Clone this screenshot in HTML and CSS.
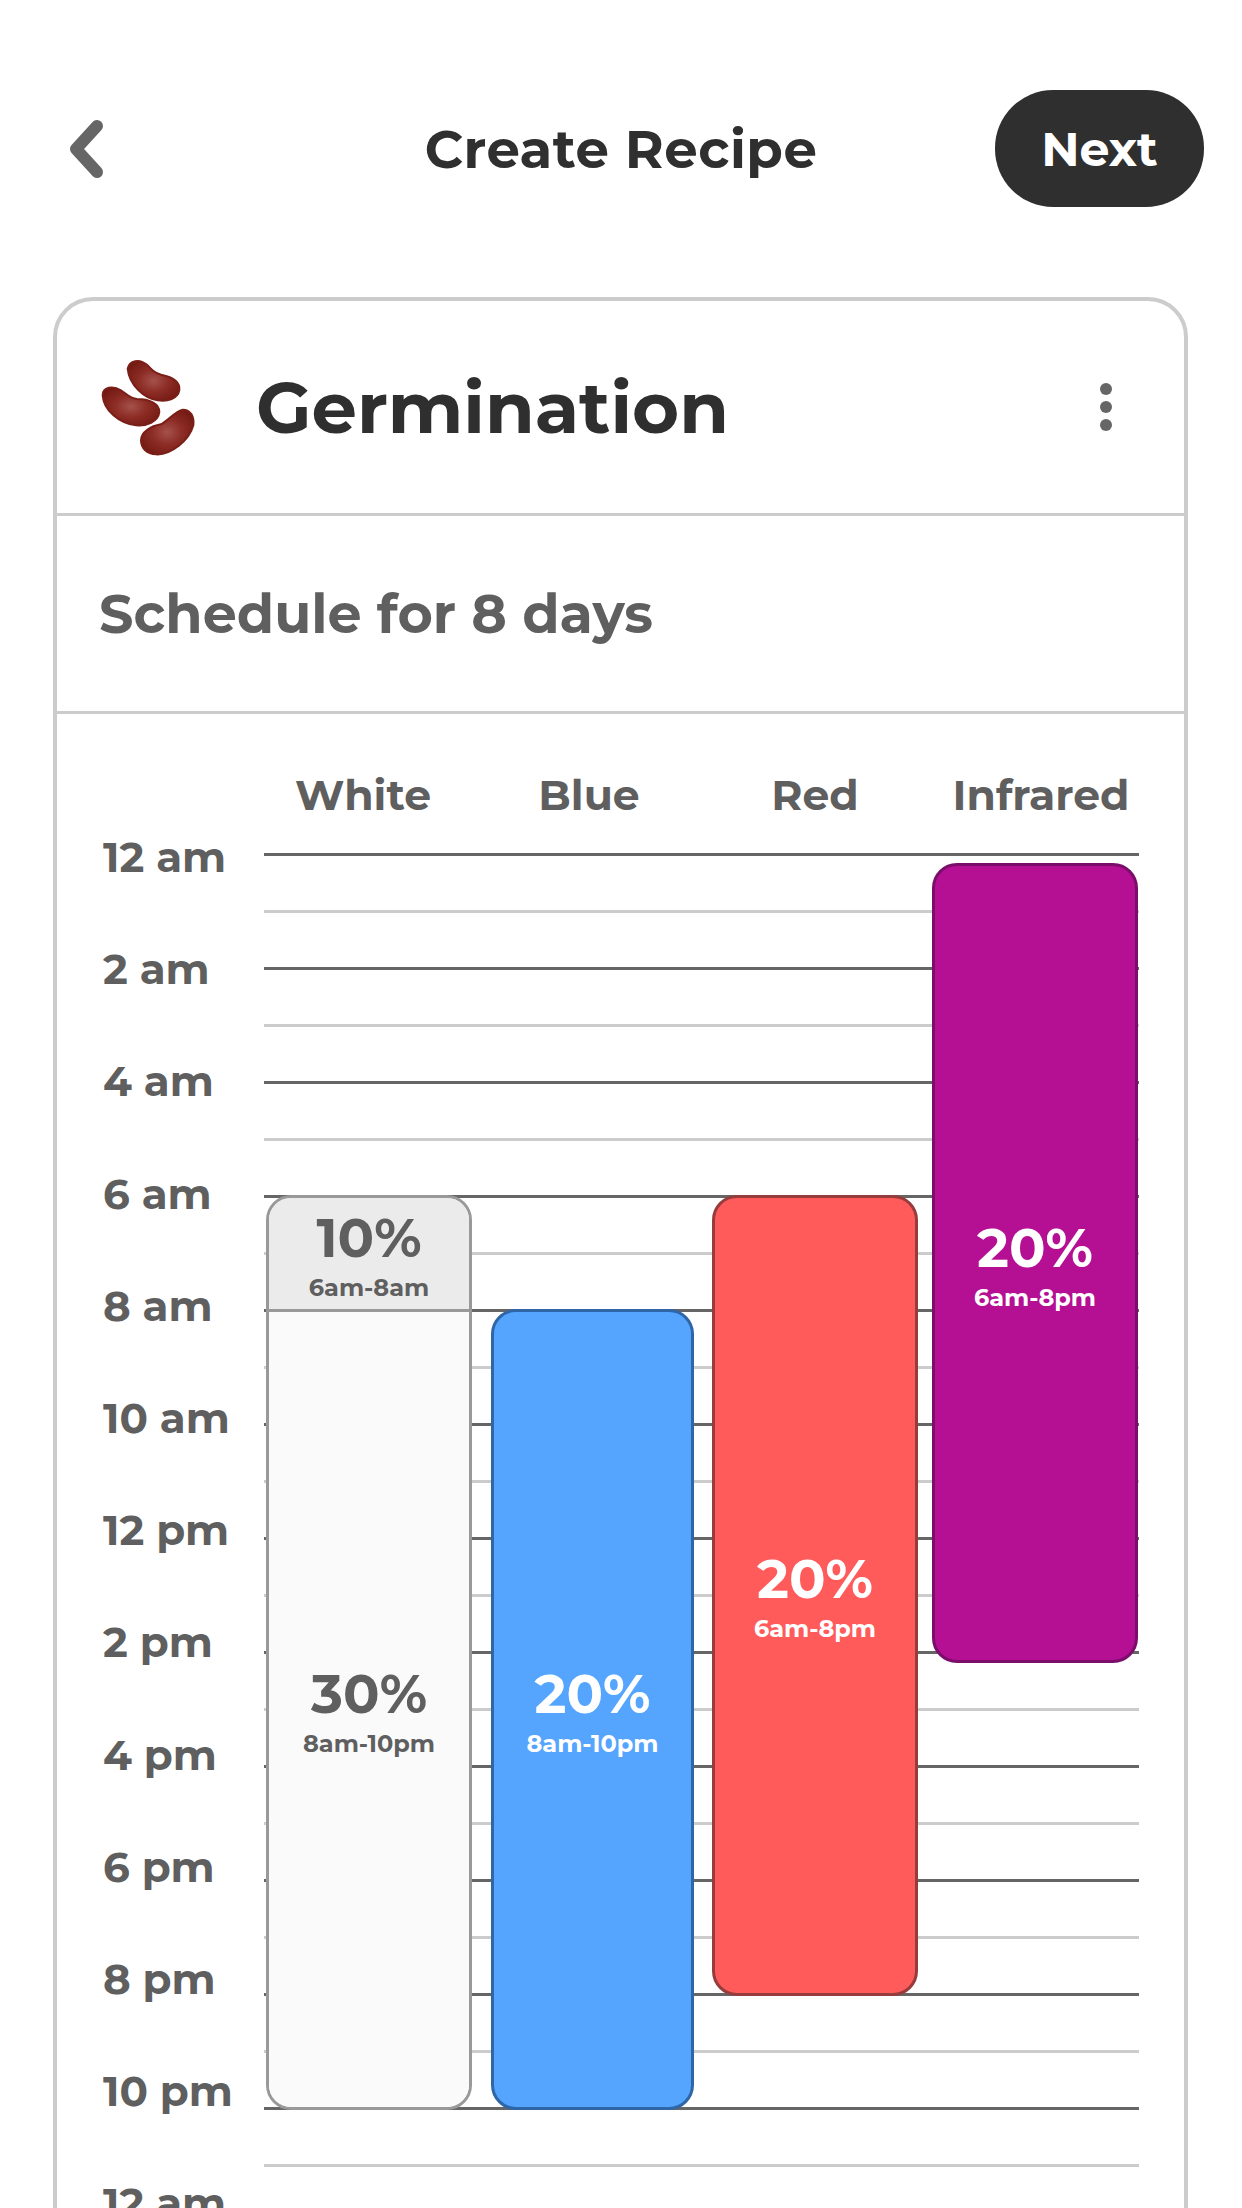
FILE: index.html
```html
<!DOCTYPE html>
<html lang="en">
<head>
<meta charset="utf-8">
<title>Create Recipe</title>
<link rel="stylesheet" href="styles.css">
</head>
<body>
<header class="topbar">
  <svg class="back" viewBox="0 0 40 66" aria-hidden="true"><path d="M31 10 L10 33 L31 56"/></svg>
  <h1 class="title">Create Recipe</h1>
  <button class="next">Next</button>
</header>
<main class="card">
  <section class="card-head">
    <svg class="beans" viewBox="120 50 285 300" aria-hidden="true">
      <defs>
        <radialGradient id="bean" cx="50%" cy="50%" r="58%">
          <stop offset="0" stop-color="#a5524c"/>
          <stop offset="0.5" stop-color="#8c2c25"/>
          <stop offset="1" stop-color="#741a13"/>
        </radialGradient>
      </defs>
      <path class="bean" d="M200 85C205 60 235 53 260 75C272 88 280 97 300 103C335 110 358 125 355 150C350 175 320 185 290 180C250 175 205 135 200 85Z"/>
      <path class="bean" d="M125 165C125 140 155 135 180 150C195 160 208 175 228 176C265 176 295 190 295 215C292 245 255 258 225 255C175 250 128 210 125 165Z"/>
      <path class="bean" d="M240 300C240 275 270 257 300 252C322 240 340 215 365 208C390 208 400 230 397 255C385 300 330 345 285 342C258 340 240 325 240 300Z"/>
    </svg>
    <h2 class="recipe-name">Germination</h2>
    <div class="dots" aria-hidden="true"><i></i><i></i><i></i></div>
  </section>
  <section class="schedule">Schedule for 8 days</section>
  <section class="chart">
    <div class="channels">
      <span>White</span><span>Blue</span><span>Red</span><span>Infrared</span>
    </div>
    <div class="chart-body">
      <div class="times">
        <span>12 am</span><span>2 am</span><span>4 am</span><span>6 am</span><span>8 am</span><span>10 am</span><span>12 pm</span><span>2 pm</span><span>4 pm</span><span>6 pm</span><span>8 pm</span><span>10 pm</span><span>12 am</span>
      </div>
      <div class="plot">
        <div class="lines">
          <i class="major"></i><i></i><i class="major"></i><i></i><i class="major"></i><i></i><i class="major"></i><i></i><i class="major"></i><i></i><i class="major"></i><i></i><i class="major"></i><i></i><i class="major"></i><i></i><i class="major"></i><i></i><i class="major"></i><i></i><i class="major"></i><i></i><i class="major"></i><i></i>
        </div>
        <div class="bars">
          <div class="bar bar-white">
            <div class="seg seg-dim"><b>10%</b><small>6am-8am</small></div>
            <div class="seg seg-light"><b>30%</b><small>8am-10pm</small></div>
          </div>
          <div class="bar bar-blue"><b>20%</b><small>8am-10pm</small></div>
          <div class="bar bar-red"><b>20%</b><small>6am-8pm</small></div>
          <div class="bar bar-infra"><b>20%</b><small>6am-8pm</small></div>
        </div>
      </div>
    </div>
  </section>
</main>
</body>
</html>
```
FILE: styles.css
```css
* { box-sizing: border-box; }
html, body { margin: 0; padding: 0; height: 2208px; overflow: hidden; background: #fff; }
body { font-family: "Montserrat", "Inter", "Liberation Sans", sans-serif; color: #2f2f2f; }

.topbar {
  display: grid;
  grid-template-columns: 1fr auto 1fr;
  align-items: center;
  height: 117px;
  margin-top: 90px;
  padding: 0 38px;
}
.back { width: 40px; height: 66px; margin-left: 28px; justify-self: start; }
.back path { fill: none; stroke: #666; stroke-width: 12; stroke-linecap: round; stroke-linejoin: round; }
.title { margin: 0; font-size: 53px; font-weight: 700; letter-spacing: 0.5px; color: #2f2f2f; }
.next {
  justify-self: end;
  width: 209px;
  height: 117px;
  border: 0;
  border-radius: 58px;
  background: #2f2f2f;
  color: #fff;
  font: inherit;
  font-size: 47.5px;
  font-weight: 700;
}

.card {
  width: 1135px;
  height: 1950px;
  margin: 90px 0 0 53px;
  border: 4px solid #ccc;
  border-radius: 40px;
  background: #fff;
}
.card-head {
  display: flex;
  align-items: center;
  height: 215px;
  padding-left: 44px;
  border-bottom: 3px solid #ccc;
}
.beans { width: 95px; height: 100px; margin-right: 60px; flex: none; overflow: visible; }
.bean { fill: url(#bean); stroke: #7a1f18; stroke-width: 6; stroke-linejoin: round; }
.recipe-name { margin: 0; font-size: 72px; font-weight: 700; color: #2f2f2f; }
.dots {
  margin-left: auto;
  margin-right: 72px;
  display: flex;
  flex-direction: column;
  gap: 6px;
}
.dots i { display: block; width: 12px; height: 12px; border-radius: 50%; background: #666; }

.schedule {
  display: flex;
  align-items: center;
  height: 198px;
  padding-left: 42px;
  border-bottom: 3px solid #ccc;
  font-size: 54px;
  font-weight: 700;
  color: #5f5f5f;
}

.channels {
  display: flex;
  margin-top: 74px;
  padding-left: 193px;
  height: 13px;
  align-items: center;
}
.channels span { width: 226px; text-align: center; font-size: 42.5px; font-weight: 700; color: #5f5f5f; }

.chart-body {
  display: flex;
  padding-left: 46px;
}
.times { display: flex; flex-direction: column; width: 161px; flex: none; }
.times span { height: 112.2px; line-height: 112.2px; font-size: 42px; font-weight: 700; color: #5f5f5f; white-space: nowrap; }

.plot { position: relative; width: 875px; margin-top: 52px; height: 1400px; }
.lines { display: flex; flex-direction: column; }
.lines i { display: block; height: 57px; border-top: 3px solid #ccc; }
.lines i.major { border-top-color: #666; }

.bars { position: absolute; inset: 0; display: flex; align-items: flex-start; }
.bar {
  display: flex;
  flex-direction: column;
  align-items: center;
  justify-content: center;
  flex: none;
  border-radius: 25px;
  border: 3px solid;
  color: #fff;
  padding-top: 4px;
}
.bar b { font-size: 54px; font-weight: 700; line-height: 60px; }
.bar small { margin-top: 4px; font-size: 24px; font-weight: 700; line-height: 32px; }

.bar-white {
  margin: 342px 0 0 2px;
  width: 206px;
  height: 915px;
  padding: 0;
  justify-content: flex-start;
  align-items: stretch;
  border-color: #999;
  color: #5f5f5f;
  overflow: hidden;
}
.seg { display: flex; flex-direction: column; align-items: center; justify-content: center; }
.seg-dim { height: 114px; flex: none; padding-top: 4px; background: #ebebeb; border-bottom: 3px solid #999; }
.seg-light { flex: 1; background: #fafafa; padding-top: 4px; }

.bar-blue { margin: 456px 0 0 19px; width: 203px; height: 801px; background: #55a5ff; border-color: #2f66a8; }
.bar-red { margin: 342px 0 0 18px; width: 206px; height: 801px; padding-top: 3px; background: #ff5b5b; border-color: #963c3c; }
.bar-infra { margin: 10px 0 0 14px; width: 206px; height: 800px; padding-top: 6px; background: #b50f94; border-color: #7a0e6a; }
```
